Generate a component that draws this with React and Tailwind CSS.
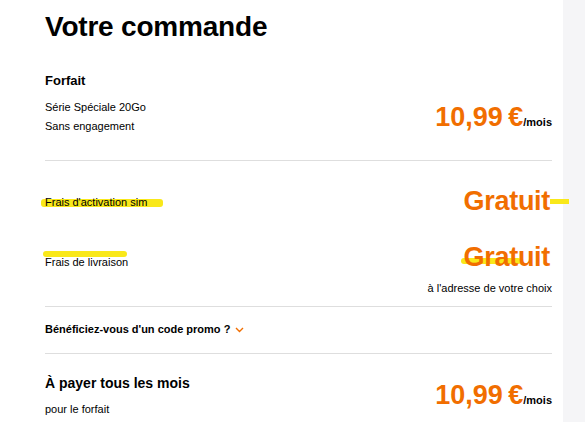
import React from 'react';

const Mark = ({ className }) => (
    <span className={`absolute rounded-[3px] bg-[#f9e81a] ${className}`}></span>
);

const Price = ({ className = '' }) => (
    <div className={`flex items-baseline ${className}`}>
        <span className="text-[27px] font-bold leading-[27px] tracking-[-0.4px] text-[#f16e00]">10,99&#8239;€</span>
        <span className="text-[11px] font-bold leading-[27px]">/mois</span>
    </div>
);

const Divider = ({ className = '' }) => <div className={`border-t border-[#dedede] ${className}`}></div>;

export default function App() {
    return (
        <div className="flex h-[422px] w-[585px] overflow-hidden bg-white font-['Liberation_Sans',Arial,sans-serif] text-black">
            <main className="relative w-[563px] shrink-0 pl-[45px] pr-[11px]">
                <h1 className="pt-[10px] text-[28px] font-bold leading-[34px] tracking-[-0.2px]">Votre commande</h1>

                <h2 className="mt-[29px] text-[13px] font-bold leading-[16px]">Forfait</h2>
                <div className="mt-[9px] flex items-end justify-between">
                    <div className="text-[11px] leading-[19px]">
                        <p>Série Spéciale 20Go</p>
                        <p>Sans engagement</p>
                    </div>
                    <Price />
                </div>

                <Divider className="mt-[24px]" />

                <div className="mt-[27px] flex items-center justify-between">
                    <span className="relative text-[11px] leading-[16px]">
                        <Mark className="-left-[4px] top-[5px] h-[8px] w-[122px]" />
                        <span className="relative">Frais d'activation sim</span>
                    </span>
                    <span className="relative mr-[2px] text-[27px] font-bold leading-[27px] tracking-[-0.3px] text-[#f16e00]">
                        Gratuit
                        <Mark className="-right-[19px] top-[11px] h-[5px] w-[19px] rounded-none" />
                    </span>
                </div>

                <div className="mt-[29px] flex items-end justify-between">
                    <span className="relative pb-[1px] text-[11px] leading-[16px]">
                        <Mark className="-left-[2px] -top-[3px] h-[6px] w-[84px]" />
                        <span className="relative">Frais de livraison</span>
                    </span>
                    <span className="relative mr-[2px] text-[27px] font-bold leading-[27px] tracking-[-0.3px] text-[#f16e00]">
                        <Mark className="-left-[3px] top-[14px] h-[6px] w-[60px]" />
                        <span className="relative">Gratuit</span>
                    </span>
                </div>
                <p className="mt-[9px] text-right text-[11px] leading-[16px]">à l'adresse de votre choix</p>

                <Divider className="mt-[10px]" />

                <div className="mt-[14px] flex items-center gap-[5px]">
                    <span className="text-[11px] font-bold leading-[16px]">Bénéficiez-vous d'un code promo ?</span>
                    <svg width="9" height="6" viewBox="0 0 9 6" fill="none" className="mt-[2px]">
                        <path d="M1 1l3.5 3.5L8 1" stroke="#f16e00" strokeWidth="1.4" />
                    </svg>
                </div>

                <Divider className="mt-[16px]" />

                <div className="mt-[20px] flex items-end justify-between">
                    <div>
                        <h2 className="text-[14px] font-bold leading-[18px]">À payer tous les mois</h2>
                        <p className="mt-[9px] text-[11px] leading-[16px]">pour le forfait</p>
                    </div>
                    <Price className="mb-[3px]" />
                </div>
            </main>
            <aside className="flex-1 bg-[#f5f5f7]"></aside>
        </div>
    );
}
